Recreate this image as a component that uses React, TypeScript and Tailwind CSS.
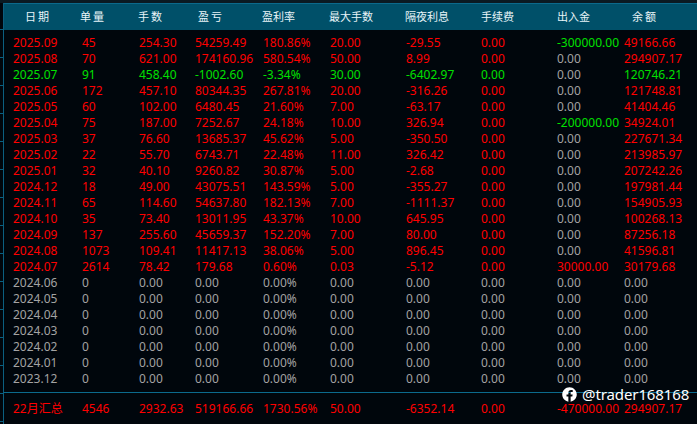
import { FaFacebook } from "react-icons/fa";

type Row = string[];

const rows: Row[] = [
  ["2025.09", "45", "254.30", "54259.49", "180.86%", "20.00", "-29.55", "0.00", "-300000.00", "49166.66"],
  ["2025.08", "70", "621.00", "174160.96", "580.54%", "50.00", "8.99", "0.00", "0.00", "294907.17"],
  ["2025.07", "91", "458.40", "-1002.60", "-3.34%", "30.00", "-6402.97", "0.00", "0.00", "120746.21"],
  ["2025.06", "172", "457.10", "80344.35", "267.81%", "20.00", "-316.26", "0.00", "0.00", "121748.81"],
  ["2025.05", "60", "102.00", "6480.45", "21.60%", "7.00", "-63.17", "0.00", "0.00", "41404.46"],
  ["2025.04", "75", "187.00", "7252.67", "24.18%", "10.00", "326.94", "0.00", "-200000.00", "34924.01"],
  ["2025.03", "37", "76.60", "13685.37", "45.62%", "5.00", "-350.50", "0.00", "0.00", "227671.34"],
  ["2025.02", "22", "55.70", "6743.71", "22.48%", "11.00", "326.42", "0.00", "0.00", "213985.97"],
  ["2025.01", "32", "40.10", "9260.82", "30.87%", "5.00", "-2.68", "0.00", "0.00", "207242.26"],
  ["2024.12", "18", "49.00", "43075.51", "143.59%", "5.00", "-355.27", "0.00", "0.00", "197981.44"],
  ["2024.11", "65", "114.60", "54637.80", "182.13%", "7.00", "-1111.37", "0.00", "0.00", "154905.93"],
  ["2024.10", "35", "73.40", "13011.95", "43.37%", "10.00", "645.95", "0.00", "0.00", "100268.13"],
  ["2024.09", "137", "255.60", "45659.37", "152.20%", "7.00", "80.00", "0.00", "0.00", "87256.18"],
  ["2024.08", "1073", "109.41", "11417.13", "38.06%", "5.00", "896.45", "0.00", "0.00", "41596.81"],
  ["2024.07", "2614", "78.42", "179.68", "0.60%", "0.03", "-5.12", "0.00", "30000.00", "30179.68"],
  ...["2024.06", "2024.05", "2024.04", "2024.03", "2024.02", "2024.01", "2023.12"].map((d) => [
    d, "0", "0.00", "0.00", "0.00%", "0.00", "0.00", "0.00", "0.00", "0.00",
  ]),
];

const summary: Row = ["22月汇总", "4546", "2932.63", "519166.66", "1730.56%", "50.00", "-6352.14", "0.00", "-470000.00", "294907.17"];

const GRID = "grid grid-cols-[69px_57px_56px_68px_67px_76px_75px_76px_67px_1fr] pl-[9px]";

// header labels sit a little off the column start, so each carries its own offset
const headers = [
  { label: "日期", cls: "pl-[12px] tracking-[2px]" },
  { label: "单量", cls: "-ml-[2px] tracking-[2px]" },
  { label: "手数", cls: "-ml-[1px] tracking-[2px]" },
  { label: "盈亏", cls: "pl-[3px] tracking-[2px]" },
  { label: "盈利率", cls: "-ml-[1px]" },
  { label: "最大手数", cls: "-ml-[1px]" },
  { label: "隔夜利息", cls: "-ml-[1px]" },
  { label: "手续费", cls: "" },
  { label: "出入金", cls: "" },
  { label: "余额", cls: "pl-[8px] tracking-[2px]" },
];

const rowColor = (r: Row) => {
  if (r[1] === "0") return "text-[#a3a3a3]";
  if (r[0] === "2025.07") return "text-[#00e000]";
  return "text-[#ff0000]";
};

const cellColor = (r: Row, i: number) => {
  if (i === 8 && r[8].startsWith("-")) return "text-[#00e000]";
  if (i === 8 && r[8] === "0.00") return "text-[#a3a3a3]";
  return "";
};

export default function App() {
  return (
    <div
      className="relative w-[697px] h-[424px] overflow-hidden bg-[#00060c] text-[12px] leading-4"
      style={{ fontFamily: '"Noto Sans", "Noto Sans CJK SC", sans-serif' }}
    >
      <div className="h-[3px] bg-[#0a1a22]" />
      <div className="ml-[3px] h-[421px] border-l border-[#0b5f80]">
        <div className={`${GRID} h-[27px] items-center border-t border-[#0b6a8c] bg-[#005069] text-[11px] text-[#e8f4f8]`}>
          {headers.map((h) => (
            <div key={h.label} className={`whitespace-nowrap ${h.cls}`}>
              {h.label}
            </div>
          ))}
        </div>

        <div className="pt-[5px] h-[362px]">
          {rows.map((r) => (
            <div key={r[0]} className={`${GRID} h-4 ${rowColor(r)}`}>
              {r.map((c, i) => (
                <div key={i} className={`whitespace-nowrap ${cellColor(r, i)}`}>
                  {c}
                </div>
              ))}
            </div>
          ))}
        </div>

        <div className={`${GRID} h-[32px] items-center border-t border-[#0b6a8c] text-[#ff0000]`}>
          {summary.map((c, i) => (
            <div key={i} className="whitespace-nowrap">
              {c}
            </div>
          ))}
        </div>
      </div>

      {/* small ticks left of the frame line */}
      <div className="absolute left-0 top-[29px] w-[3px] h-[395px] bg-[repeating-linear-gradient(180deg,#0b5f80_0,#0b5f80_1px,transparent_1px,transparent_28px)]" />

      <div className="absolute left-[562px] top-[386px] flex items-center gap-[5px] text-white text-[15px] leading-4 tracking-[-0.1px]">
        <FaFacebook className="w-[15px] h-[15px]" />
        <span>@trader168168</span>
      </div>
    </div>
  );
}
